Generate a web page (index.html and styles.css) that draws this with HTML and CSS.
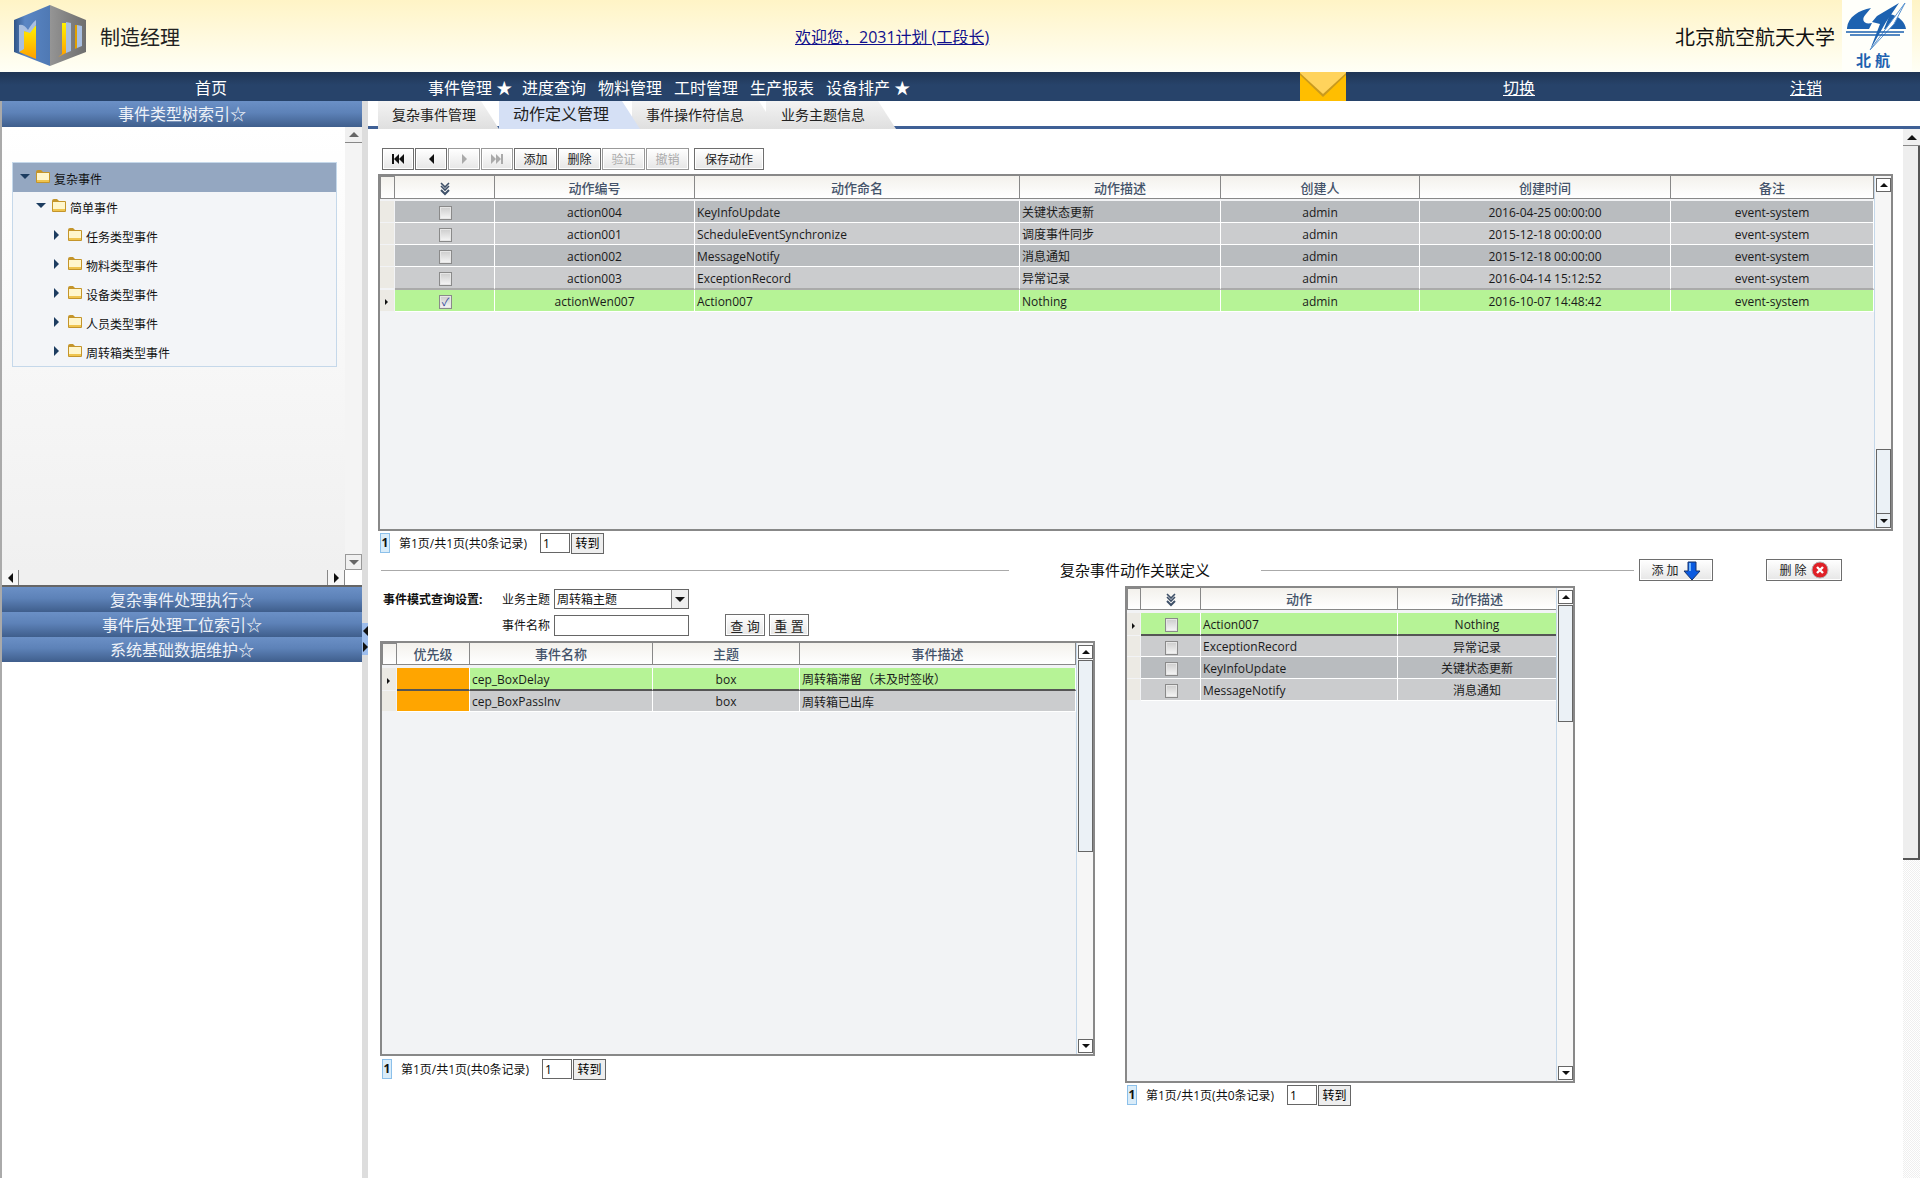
FILE: index.html
```html
<!DOCTYPE html>
<html lang="zh-CN">
<head>
    <meta charset="UTF-8">
    <title>制造经理</title>
    <link rel="stylesheet" href="styles.css">
</head>
<body>
    <svg class="defs" width="0" height="0">
        <symbol id="folder" viewBox="0 0 16 15">
            <path d="M1 3 Q1 1 3 1 H6 L8 3 H14 Q15 3 15 4 V13 Q15 14 14 14 H2 Q1 14 1 13 Z" fill="#c4952b"/>
            <path d="M2 4 H14 V12 H2 Z" fill="#fff6cc"/>
            <path d="M2 11 H14 V13 H2 Z" fill="#efc44e"/>
        </symbol>
        <symbol id="checks" viewBox="0 0 10 14">
            <path d="M1 1 L5 5 L9 1 M1 4 L5 8 L9 4" fill="none" stroke="#3e5068" stroke-width="1.6"/>
            <path d="M1 8 L5 12 L9 8" fill="none" stroke="#3e5068" stroke-width="2"/>
        </symbol>
    </svg>

    <header class="top">
        <div class="brand">
            <svg class="cube" width="72" height="62" viewBox="0 0 72 62">
                <defs>
                    <linearGradient id="cubeGray" x1="0" x2="1" y1="0" y2="0">
                        <stop offset="0" stop-color="#959595"/>
                        <stop offset="1" stop-color="#6e6e6e"/>
                    </linearGradient>
                    <linearGradient id="cubeBlue" x1="0" x2="1" y1="0" y2="0">
                        <stop offset="0" stop-color="#2f5487"/>
                        <stop offset="0.3" stop-color="#5a86c4"/>
                        <stop offset="1" stop-color="#4f79b4"/>
                    </linearGradient>
                    <linearGradient id="cubeGold" x1="0" x2="0" y1="0" y2="1">
                        <stop offset="0" stop-color="#fff200"/>
                        <stop offset="1" stop-color="#ff9f00"/>
                    </linearGradient>
                </defs>
                <path d="M36 0 L0 15 V47 L36 61 Z" fill="url(#cubeBlue)"/>
                <path d="M36 0 L72 15 V47 L36 61 Z" fill="url(#cubeGray)"/>
                <path d="M5 47 L10 43 V26 L15 27 L22 20 V54 Z" fill="url(#cubeGold)"/>
                <path d="M5 20 Q10 19 14 25 Q18 18 22 15 V20 Q19 24 16 28 L10 26 V44 L5 47 Z" fill="#a9bfe0"/>
                <path d="M48 18 H52 V48 L44 52 L48 49 Z" fill="url(#cubeGold)"/>
                <path d="M52 17 L57 18 V46 L52 48 Z" fill="#a9bfe0"/>
                <path d="M63 20 L68 21 V41 L63 43 Z" fill="#a9bfe0"/>
                <path d="M61 20 L63 20 V43 L61 44 Z" fill="#e0a000"/>
            </svg>
            <span class="brand-name">制造经理</span>
        </div>
        <a class="welcome" href="#">欢迎您，2031计划 (工段长)</a>
        <span class="school">北京航空航天大学</span>
        <div class="school-logo">
            <svg width="70" height="72" viewBox="0 0 70 72">
                <path d="M5 28 C6 17 17 10 29 8 L24 14 C19 19 21 25 30 23 L27 29 H5 Z" fill="#1d62b0"/>
                <path d="M48 14 C57 16 63 22 64 29 H42 Z" fill="#1d62b0"/>
                <path d="M57 3 L35 16 L30 22 L38 24 L28 50 L44 22 Z" fill="#1d62b0"/>
                <path d="M63 3 L28 50 L52 24 Z" fill="#fff" stroke="#5a93cf"/>
                <path d="M4 32 H62 M8 35 H58" stroke="#1d62b0" stroke-width="1.5"/>
                <text x="14" y="66" class="school-mark">北航</text>
            </svg>
        </div>
    </header>

    <nav class="menu">
        <a class="menu-home">首页</a>
        <div class="menu-items">
            <a class="starred">事件管理 ★</a>
            <a>进度查询</a>
            <a>物料管理</a>
            <a>工时管理</a>
            <a>生产报表</a>
            <a class="starred">设备排产 ★</a>
        </div>
        <div class="mail">
            <svg width="46" height="29" viewBox="0 0 46 29">
                <rect width="46" height="29" fill="#ffbe00"/>
                <path d="M0 0 H46 V3 L23 25 L0 3 Z" fill="#c99a1e"/>
                <path d="M0 0 H46 V1 L23 22 L0 1 Z" fill="#ffd35c"/>
            </svg>
        </div>
        <a class="menu-link switch" href="#">切换</a>
        <a class="menu-link logout" href="#">注销</a>
    </nav>

    <div class="work">
        <aside class="side">
            <div class="bar">事件类型树索引☆</div>
            <div class="tree-wrap">
                <div class="tree-area">
                    <ul class="tree">
                        <li class="selected"><i class="arrow open"></i><svg class="fold"><use href="#folder"/></svg>复杂事件</li>
                        <li class="lv2"><i class="arrow open"></i><svg class="fold"><use href="#folder"/></svg>简单事件</li>
                        <li class="lv3"><i class="arrow"></i><svg class="fold"><use href="#folder"/></svg>任务类型事件</li>
                        <li class="lv3"><i class="arrow"></i><svg class="fold"><use href="#folder"/></svg>物料类型事件</li>
                        <li class="lv3"><i class="arrow"></i><svg class="fold"><use href="#folder"/></svg>设备类型事件</li>
                        <li class="lv3"><i class="arrow"></i><svg class="fold"><use href="#folder"/></svg>人员类型事件</li>
                        <li class="lv3"><i class="arrow"></i><svg class="fold"><use href="#folder"/></svg>周转箱类型事件</li>
                    </ul>
                </div>
                <div class="side-vscroll">
                    <div class="sbtn"><i class="tri up gray"></i></div>
                    <div class="sbtn down"><i class="tri dn gray"></i></div>
                </div>
            </div>
            <div class="side-hscroll">
                <div class="hbtn"><i class="tri lf"></i></div>
                <div class="hthumb"></div>
                <div class="hbtn"><i class="tri rt"></i></div>
                <div class="hcorner"></div>
            </div>
            <div class="bar">复杂事件处理执行☆</div>
            <div class="bar">事件后处理工位索引☆</div>
            <div class="bar">系统基础数据维护☆</div>
        </aside>

        <div class="splitter">
            <div class="split-handle"><i class="tri lf"></i><i class="tri rt"></i></div>
        </div>

        <main class="content">
            <div class="tabs">
                <div class="tab first">复杂事件管理</div>
                <div class="tab active">动作定义管理</div>
                <div class="tab third">事件操作符信息</div>
                <div class="tab fourth">业务主题信息</div>
            </div>

            <div class="content-row">
                <div class="panel">
                    <div class="toolbar">
                        <button class="btn icon"><i class="bar-l"></i><i class="tri lf"></i><i class="tri lf"></i></button>
                        <button class="btn icon"><i class="tri lf"></i></button>
                        <button class="btn icon off"><i class="tri rt"></i></button>
                        <button class="btn icon off"><i class="tri rt"></i><i class="tri rt"></i><i class="bar-l"></i></button>
                        <button class="btn act">添加</button>
                        <button class="btn act">删除</button>
                        <button class="btn act off">验证</button>
                        <button class="btn act off">撤销</button>
                        <button class="btn save">保存动作</button>
                    </div>

                    <div class="grid grid-actions">
                        <div class="grid-body">
                            <table>
                                <colgroup>
                                    <col class="w15"><col class="w100"><col class="w200"><col class="w325"><col class="w201"><col class="w199"><col class="w251"><col class="w203">
                                </colgroup>
                                <thead>
                                    <tr><th></th><th><svg class="checks"><use href="#checks"/></svg></th><th>动作编号</th><th>动作命名</th><th>动作描述</th><th>创建人</th><th>创建时间</th><th>备注</th></tr>
                                </thead>
                                <tbody>
                                    <tr class="dark"><td class="mark"></td><td class="c"><i class="cb"></i></td><td class="c">action004</td><td>KeyInfoUpdate</td><td>关键状态更新</td><td class="c">admin</td><td class="c">2016-04-25 00:00:00</td><td class="c">event-system</td></tr>
                                    <tr class="light"><td class="mark"></td><td class="c"><i class="cb"></i></td><td class="c">action001</td><td>ScheduleEventSynchronize</td><td>调度事件同步</td><td class="c">admin</td><td class="c">2015-12-18 00:00:00</td><td class="c">event-system</td></tr>
                                    <tr class="dark"><td class="mark"></td><td class="c"><i class="cb"></i></td><td class="c">action002</td><td>MessageNotify</td><td>消息通知</td><td class="c">admin</td><td class="c">2015-12-18 00:00:00</td><td class="c">event-system</td></tr>
                                    <tr class="light before-sel"><td class="mark"></td><td class="c"><i class="cb"></i></td><td class="c">action003</td><td>ExceptionRecord</td><td>异常记录</td><td class="c">admin</td><td class="c">2016-04-14 15:12:52</td><td class="c">event-system</td></tr>
                                    <tr class="sel"><td class="mark"><i class="tri rt tiny"></i></td><td class="c"><i class="cb on">✓</i></td><td class="c">actionWen007</td><td>Action007</td><td>Nothing</td><td class="c">admin</td><td class="c">2016-10-07 14:48:42</td><td class="c">event-system</td></tr>
                                </tbody>
                            </table>
                        </div>
                        <div class="gscroll">
                            <div class="gbtn"><i class="tri up"></i></div>
                            <div class="gspace"></div>
                            <div class="gthumb t65"></div>
                            <div class="gbtn joined"><i class="tri dn"></i></div>
                        </div>
                    </div>

                    <div class="pager">
                        <span class="page-no">1</span>
                        <span class="page-text">第1页/共1页(共0条记录)</span>
                        <input class="page-input" type="text" value="1">
                        <button class="page-go">转到</button>
                    </div>

                    <div class="section">
                        <i class="rule r-left"></i>
                        <span class="section-title">复杂事件动作关联定义</span>
                        <i class="rule r-right"></i>
                        <button class="btn add">添 加
                            <svg width="18" height="20" viewBox="0 0 18 20">
                                <path d="M5 1 H13 V10 H17 L9 19 L1 10 H5 Z" fill="#0a5ae0" stroke="#16336b"/>
                                <path d="M6 2 H8 V10 H6 Z" fill="#6fb4ff"/>
                            </svg>
                        </button>
                        <button class="btn del">删 除
                            <svg width="18" height="18" viewBox="0 0 18 18">
                                <circle cx="9" cy="9" r="8" fill="#e02027" stroke="#b3b3b3"/>
                                <path d="M6 6 L12 12 M12 6 L6 12" stroke="#fff" stroke-width="2.4"/>
                            </svg>
                        </button>
                    </div>

                    <div class="lower">
                        <div class="lower-left">
                            <div class="query">
                                <div class="query-row">
                                    <b class="query-title">事件模式查询设置:</b>
                                    <span class="query-label">业务主题</span>
                                    <div class="select"><span>周转箱主题</span><em><i class="tri dn"></i></em></div>
                                </div>
                                <div class="query-row indent">
                                    <span class="query-label">事件名称</span>
                                    <input class="query-input" type="text">
                                    <button class="btn qbtn first-q">查 询</button>
                                    <button class="btn qbtn">重 置</button>
                                </div>
                            </div>

                            <div class="grid grid-events">
                                <div class="grid-body">
                                    <table>
                                        <colgroup>
                                            <col class="w15"><col class="w73"><col class="w183"><col class="w147"><col class="w276">
                                        </colgroup>
                                        <thead>
                                            <tr><th></th><th>优先级</th><th>事件名称</th><th>主题</th><th>事件描述</th></tr>
                                        </thead>
                                        <tbody>
                                            <tr class="sel heavy"><td class="mark"><i class="tri rt tiny"></i></td><td class="prio"></td><td>cep_BoxDelay</td><td class="c">box</td><td>周转箱滞留（未及时签收）</td></tr>
                                            <tr class="light"><td class="mark"></td><td class="prio"></td><td>cep_BoxPassInv</td><td class="c">box</td><td>周转箱已出库</td></tr>
                                        </tbody>
                                    </table>
                                </div>
                                <div class="gscroll">
                                    <div class="gbtn"><i class="tri up"></i></div>
                                    <div class="gthumb t192"></div>
                                    <div class="gspace"></div>
                                    <div class="gbtn"><i class="tri dn"></i></div>
                                </div>
                            </div>

                            <div class="pager">
                                <span class="page-no">1</span>
                                <span class="page-text">第1页/共1页(共0条记录)</span>
                                <input class="page-input" type="text" value="1">
                                <button class="page-go">转到</button>
                            </div>
                        </div>

                        <div class="lower-right">
                            <div class="grid grid-links">
                                <div class="grid-body">
                                    <table>
                                        <colgroup>
                                            <col class="w14"><col class="w60"><col class="w197"><col class="w159">
                                        </colgroup>
                                        <thead>
                                            <tr><th></th><th><svg class="checks"><use href="#checks"/></svg></th><th>动作</th><th>动作描述</th></tr>
                                        </thead>
                                        <tbody>
                                            <tr class="sel heavy"><td class="mark"><i class="tri rt tiny"></i></td><td class="c"><i class="cb"></i></td><td>Action007</td><td class="c">Nothing</td></tr>
                                            <tr class="light"><td class="mark"></td><td class="c"><i class="cb"></i></td><td>ExceptionRecord</td><td class="c">异常记录</td></tr>
                                            <tr class="dark"><td class="mark"></td><td class="c"><i class="cb"></i></td><td>KeyInfoUpdate</td><td class="c">关键状态更新</td></tr>
                                            <tr class="light"><td class="mark"></td><td class="c"><i class="cb"></i></td><td>MessageNotify</td><td class="c">消息通知</td></tr>
                                        </tbody>
                                    </table>
                                </div>
                                <div class="gscroll">
                                    <div class="gbtn"><i class="tri up"></i></div>
                                    <div class="gthumb t117"></div>
                                    <div class="gspace"></div>
                                    <div class="gbtn"><i class="tri dn"></i></div>
                                </div>
                            </div>

                            <div class="pager">
                                <span class="page-no">1</span>
                                <span class="page-text">第1页/共1页(共0条记录)</span>
                                <input class="page-input" type="text" value="1">
                                <button class="page-go">转到</button>
                            </div>
                        </div>
                    </div>
                </div>

                <div class="page-scroll">
                    <div class="sbtn tall"><i class="tri up"></i></div>
                    <div class="page-thumb"></div>
                    <div class="page-track"></div>
                </div>
            </div>
        </main>
    </div>
</body>
</html>
```

FILE: styles.css
```css
* {
    box-sizing: border-box;
}
html, body {
    height: 100%;
}
body {
    margin: 0;
    display: flex;
    flex-direction: column;
    overflow: hidden;
    background-color: #fff;
    color: #111;
    font-family: "Open Sans", "Noto Sans CJK SC", sans-serif;
    font-size: 12px;
}
.defs {
    position: absolute;
}
a {
    color: inherit;
}

/* header */
.top {
    height: 72px;
    flex: none;
    display: flex;
    align-items: center;
    background: linear-gradient(#fff4c6, #fffff6);
}
.brand {
    width: 795px;
    height: 72px;
    display: flex;
    align-items: center;
    padding-left: 14px;
}
.brand-name {
    margin-left: 14px;
    font-size: 20px;
    color: #222;
}
.welcome {
    color: #10108c;
    font-size: 16px;
}
.school {
    margin-left: auto;
    font-size: 20px;
    color: #111;
}
.school-logo {
    width: 70px;
    height: 72px;
    margin: 0 8px 0 7px;
    background-color: #fffffa;
}
.school-mark {
    font-size: 15px;
    font-weight: bold;
    fill: #1d62b0;
    letter-spacing: 4px;
}

/* menu */
.menu {
    height: 29px;
    flex: none;
    display: flex;
    align-items: center;
    background: linear-gradient(#1f3554, #27436a 45%);
    color: #fff;
    font-size: 16px;
}
.menu-home {
    width: 422px;
    text-align: center;
}
.menu-items {
    width: 878px;
    padding-left: 6px;
    display: flex;
    gap: 12px;
}
.starred {
    width: 82px;
    white-space: nowrap;
}
.mail {
    width: 46px;
    height: 29px;
}
.mail svg {
    display: block;
}
.menu-link {
    text-align: center;
}
.switch {
    width: 346px;
}
.logout {
    width: 228px;
}

/* work area */
.work {
    flex: 1;
    min-height: 0;
    display: flex;
}
.side {
    width: 362px;
    flex: none;
    border-left: 2px solid #aaa;
    display: flex;
    flex-direction: column;
}
.bar {
    height: 25px;
    flex: none;
    text-align: center;
    line-height: 26px;
    color: #eef2f8;
    font-size: 16px;
    background: linear-gradient(#6b90c6, #5d82b8 45%, #3f5e8c);
}
.side > .bar:first-child {
    height: 26px;
    line-height: 27px;
}
.tree-wrap {
    height: 443px;
    flex: none;
    display: flex;
}
.tree-area {
    flex: 1;
    padding: 35px 8px 0 10px;
    background: linear-gradient(#fff, #f0f0f0);
}
.tree {
    list-style: none;
    margin: 0;
    padding: 0;
    height: 205px;
    border: 1px solid #c5d8ea;
    background-color: #f3f5f8;
}
.tree li {
    height: 29px;
    display: flex;
    align-items: center;
    padding-left: 7px;
    padding-top: 2px;
}
.tree .selected {
    background-color: #94a7c1;
}
.tree .lv2 {
    padding-left: 23px;
}
.tree .lv3 {
    padding-left: 41px;
}
.arrow {
    width: 0;
    height: 0;
    margin-right: 4px;
    margin-top: -3px;
    border-style: solid;
    border-width: 5px 0 5px 5px;
    border-color: transparent transparent transparent #1c3c60;
}
.lv3 .arrow {
    margin-right: 8px;
}
.arrow.open {
    margin-top: -5px;
    margin-right: 5px;
    border-width: 5px 5px 0;
    border-color: #1c3c60 transparent transparent;
}
.fold {
    width: 16px;
    height: 15px;
    margin-right: 3px;
    margin-top: -5px;
}
.side-vscroll {
    width: 17px;
    flex: none;
    display: flex;
    flex-direction: column;
    justify-content: space-between;
    background-color: #f4f4f4;
}
.sbtn {
    height: 16px;
    display: flex;
    align-items: center;
    justify-content: center;
    background-color: #f0f0f0;
    border-bottom: 1px solid #888;
}
.sbtn.down {
    border: 1px solid #999;
}
.sbtn.tall {
    height: 17px;
}
.side-hscroll {
    height: 17px;
    flex: none;
    display: flex;
    border-bottom: 2px solid #666;
    background-color: #f0f0f0;
}
.hbtn {
    width: 17px;
    display: flex;
    align-items: center;
    justify-content: center;
    border-right: 1px solid #888;
    background-color: #f6f6f6;
}
.hthumb {
    flex: 1;
    border-right: 1px solid #888;
}
.hcorner {
    width: 17px;
    background-color: #fff;
}

/* small triangles */
.tri {
    display: inline-block;
    width: 0;
    height: 0;
    border-style: solid;
}
.tri.up {
    border-width: 0 5px 5px;
    border-color: transparent transparent #111;
}
.tri.dn {
    border-width: 5px 5px 0;
    border-color: #111 transparent transparent;
}
.tri.lf {
    border-width: 5px 5px 5px 0;
    border-color: transparent #111 transparent transparent;
}
.tri.rt {
    border-width: 5px 0 5px 5px;
    border-color: transparent transparent transparent #111;
}
.tri.up.gray {
    border-bottom-color: #666;
}
.tri.dn.gray {
    border-top-color: #666;
}
.tri.tiny {
    border-width: 3px 0 3px 3px;
}

.splitter {
    width: 6px;
    flex: none;
    background-color: #ddd;
    position: relative;
}
.split-handle {
    position: absolute;
    left: 0;
    top: 522px;
    width: 6px;
    height: 32px;
    background-color: #9dbdec;
    display: flex;
    flex-direction: column;
    align-items: center;
    justify-content: space-around;
}

/* content */
.content {
    flex: 1;
    min-width: 0;
    display: flex;
    flex-direction: column;
}
.content-row {
    flex: 1;
    min-height: 0;
    display: flex;
}
.page-scroll {
    width: 17px;
    flex: none;
    display: flex;
    flex-direction: column;
    background-color: #f3f3f3;
}
.page-thumb {
    height: 714px;
    background-color: #eee;
    border-right: 2px solid #555;
    border-bottom: 2px solid #555;
}
.page-track {
    flex: 1;
    background: repeating-conic-gradient(#efefef 0 25%, #fff 0 50%) 0 0 / 2px 2px;
}
.tabs {
    height: 28px;
    flex: none;
    display: flex;
    padding-left: 10px;
    background: linear-gradient(#3f6096, #3f6096) bottom / 100% 3px no-repeat;
    font-size: 14px;
}
.tab {
    height: 28px;
    line-height: 27px;
    color: #222;
    background: linear-gradient(#f3f3f3, #dfdfdf);
    clip-path: polygon(0 0, calc(100% - 18px) 0, 100% 100%, 0 100%);
}
.tab.first {
    width: 121px;
    padding-left: 14px;
}
.tab.active {
    width: 141px;
    padding-left: 14px;
    font-size: 16px;
    background: #d5e0f5;
    position: relative;
    z-index: 2;
}
.tab.third {
    width: 145px;
    margin-left: -8px;
    padding-left: 14px;
    position: relative;
    z-index: 1;
}
.tab.fourth {
    width: 130px;
    margin-left: -11px;
    padding-left: 15px;
}
.panel {
    flex: 1;
    min-width: 0;
    padding: 19px 10px 0 10px;
}

/* buttons */
.btn {
    height: 22px;
    padding: 0;
    border: 1px solid #6e6e6e;
    box-shadow: inset 0 0 0 1px #fff;
    background: linear-gradient(#fff, #e6e6e6);
    color: #222;
    font: inherit;
    display: inline-flex;
    align-items: center;
    justify-content: center;
}
.btn.off {
    color: #aaa;
    border-color: #999;
}
.btn.off .tri {
    border-left-color: #aaa;
}
.toolbar {
    height: 22px;
    margin-left: 4px;
    display: flex;
    gap: 1px;
}
.btn.icon {
    width: 32px;
}
.btn.icon .bar-l {
    width: 2px;
    height: 10px;
    background-color: #111;
}
.btn.icon.off .bar-l {
    background-color: #aaa;
}
.btn.act {
    width: 43px;
}
.btn.save {
    width: 70px;
    margin-left: 4px;
}

/* grids */
.grid {
    display: flex;
    border: 2px solid #888;
    background-color: #f2f3f5;
}
.grid-actions {
    height: 357px;
    margin-top: 4px;
}
.grid-events {
    width: 715px;
    height: 415px;
    margin-top: 5px;
}
.grid-links {
    width: 450px;
    height: 497px;
}
.grid-body {
    flex: 1;
    min-width: 0;
}
table {
    table-layout: fixed;
    width: 100%;
    border-collapse: separate;
    border-spacing: 0;
}
tbody::before {
    content: "";
    display: block;
    height: 2px;
}
.w14 { width: 14px; }
.w15 { width: 15px; }
.w60 { width: 60px; }
.w73 { width: 73px; }
.w100 { width: 100px; }
.w147 { width: 147px; }
.w159 { width: 159px; }
.w183 { width: 183px; }
.w197 { width: 197px; }
.w199 { width: 199px; }
.w200 { width: 200px; }
.w201 { width: 201px; }
.w203 { width: 203px; }
.w251 { width: 251px; }
.w276 { width: 276px; }
.w325 { width: 325px; }
th {
    height: 23px;
    padding: 0;
    font-size: 13px;
    font-weight: 500;
    color: #44536a;
    background: linear-gradient(#f3f1ec, #fff);
    border-right: 1px solid #888;
    border-bottom: 1px solid #888;
}
th:first-child {
    border-left: 1px solid #888;
    border-top: 1px solid #888;
}
td {
    height: 22px;
    padding: 1px 2px 0;
    white-space: nowrap;
    overflow: hidden;
    border-right: 1px solid #fff;
    border-bottom: 1px solid #fff;
    color: #1a1a1a;
}
.c {
    text-align: center;
}
.dark td {
    background-color: #b9bcbf;
}
.light td {
    background-color: #cbccce;
}
.sel td {
    background-color: #b6f396;
}
.before-sel td {
    height: 23px;
    border-bottom: 2px solid #aaa;
}
tr td.mark {
    padding: 0 0 0 5px;
    background-color: #eceae4;
    border-color: #f2f3f5;
}
.heavy td {
    height: 23px;
    border-bottom: 2px solid #555;
}
.heavy + tr td {
    height: 21px;
}
.heavy td.mark {
    border-bottom: 1px solid #f2f3f5;
}
tr td.prio {
    background-color: #ffa500;
}
.checks {
    width: 10px;
    height: 14px;
    vertical-align: middle;
}
.cb {
    display: inline-block;
    width: 13px;
    height: 14px;
    margin-left: 2px;
    vertical-align: middle;
    border: 1px solid #8a8a8a;
    box-shadow: inset 0 0 0 1px #e6e6e6;
    background: linear-gradient(#ccc, #f6f6f6);
    font-style: normal;
    font-size: 11px;
    line-height: 12px;
    color: #33479a;
}
.gscroll {
    width: 17px;
    flex: none;
    display: flex;
    flex-direction: column;
    padding: 2px 0 1px 1px;
    border-left: 1px solid #c5d8ea;
    background-color: #f6f6f6;
}
.gbtn {
    height: 14px;
    flex: none;
    display: flex;
    align-items: center;
    justify-content: center;
    border: 1px solid #666;
    background-color: #fff;
}
.gbtn .tri.up {
    border-width: 0 4px 4px;
}
.gbtn .tri.dn {
    border-width: 4px 4px 0;
}
.gbtn.joined {
    border-top: 0;
    background-color: #ebf1f6;
}
.gspace {
    flex: 1;
}
.gthumb {
    flex: none;
    border: 1px solid #666;
    background-color: #ebf1f6;
}
.t65 { height: 65px; }
.t117 { height: 117px; margin-top: 1px; }
.t192 { height: 192px; margin-top: 1px; }
.grid-events th {
    height: 22px;
}
.grid-events tbody::before,
.grid-links tbody::before {
    height: 3px;
}
.grid-links th {
    height: 22px;
}

/* pager */
.pager {
    height: 20px;
    margin-top: 2px;
    padding-left: 2px;
    display: flex;
    align-items: center;
}
.page-no {
    width: 10px;
    height: 20px;
    line-height: 18px;
    text-align: center;
    font-weight: bold;
    border: 1px solid #8cc0ea;
    background-color: #d9ecf9;
}
.page-text {
    width: 141px;
    margin-left: 9px;
    white-space: nowrap;
}
.page-input {
    width: 30px;
    height: 20px;
    padding: 0 2px;
    border: 1px solid #666;
    font: inherit;
}
.page-go {
    width: 33px;
    height: 21px;
    margin-left: 1px;
    padding: 0;
    border: 1px solid #666;
    background-color: #eee;
    font: inherit;
}

/* relation section */
.section {
    height: 22px;
    margin-top: 6px;
    padding-left: 3px;
    display: flex;
    align-items: center;
}
.rule {
    height: 1px;
    background-color: #aaa;
}
.r-left {
    width: 628px;
}
.r-right {
    width: 373px;
}
.section-title {
    width: 150px;
    margin: -2px 51px 0;
    font-size: 15px;
    white-space: nowrap;
}
.btn.add {
    width: 74px;
    margin-left: 5px;
    gap: 4px;
}
.btn.add svg {
    margin-top: 2px;
}
.btn.del {
    width: 76px;
    margin-left: 53px;
    gap: 4px;
}

/* lower half */
.lower {
    display: flex;
    margin-top: 5px;
}
.lower-left {
    width: 715px;
    margin-left: 2px;
    padding-top: 3px;
}
.lower-right {
    width: 450px;
    margin-left: 30px;
}
.query-row {
    display: flex;
    align-items: center;
    height: 20px;
}
.query-row.indent {
    height: 22px;
    margin-top: 5px;
    padding-left: 122px;
}
.query-title {
    width: 119px;
    margin-left: 3px;
    white-space: nowrap;
}
.query-label {
    width: 52px;
}
.select {
    width: 135px;
    height: 20px;
    padding-left: 2px;
    display: flex;
    align-items: center;
    justify-content: space-between;
    border: 1px solid #666;
}
.select em {
    width: 17px;
    height: 18px;
    display: flex;
    align-items: center;
    justify-content: center;
    border-left: 1px solid #888;
    background-color: #eee;
}
.query-input {
    width: 135px;
    height: 21px;
    padding: 0 2px;
    border: 1px solid #666;
}
.btn.qbtn {
    width: 40px;
    margin-left: 4px;
    font-size: 13px;
}
.btn.first-q {
    margin-left: 36px;
}
.grid-events + .pager {
    margin-top: 3px;
}
```
